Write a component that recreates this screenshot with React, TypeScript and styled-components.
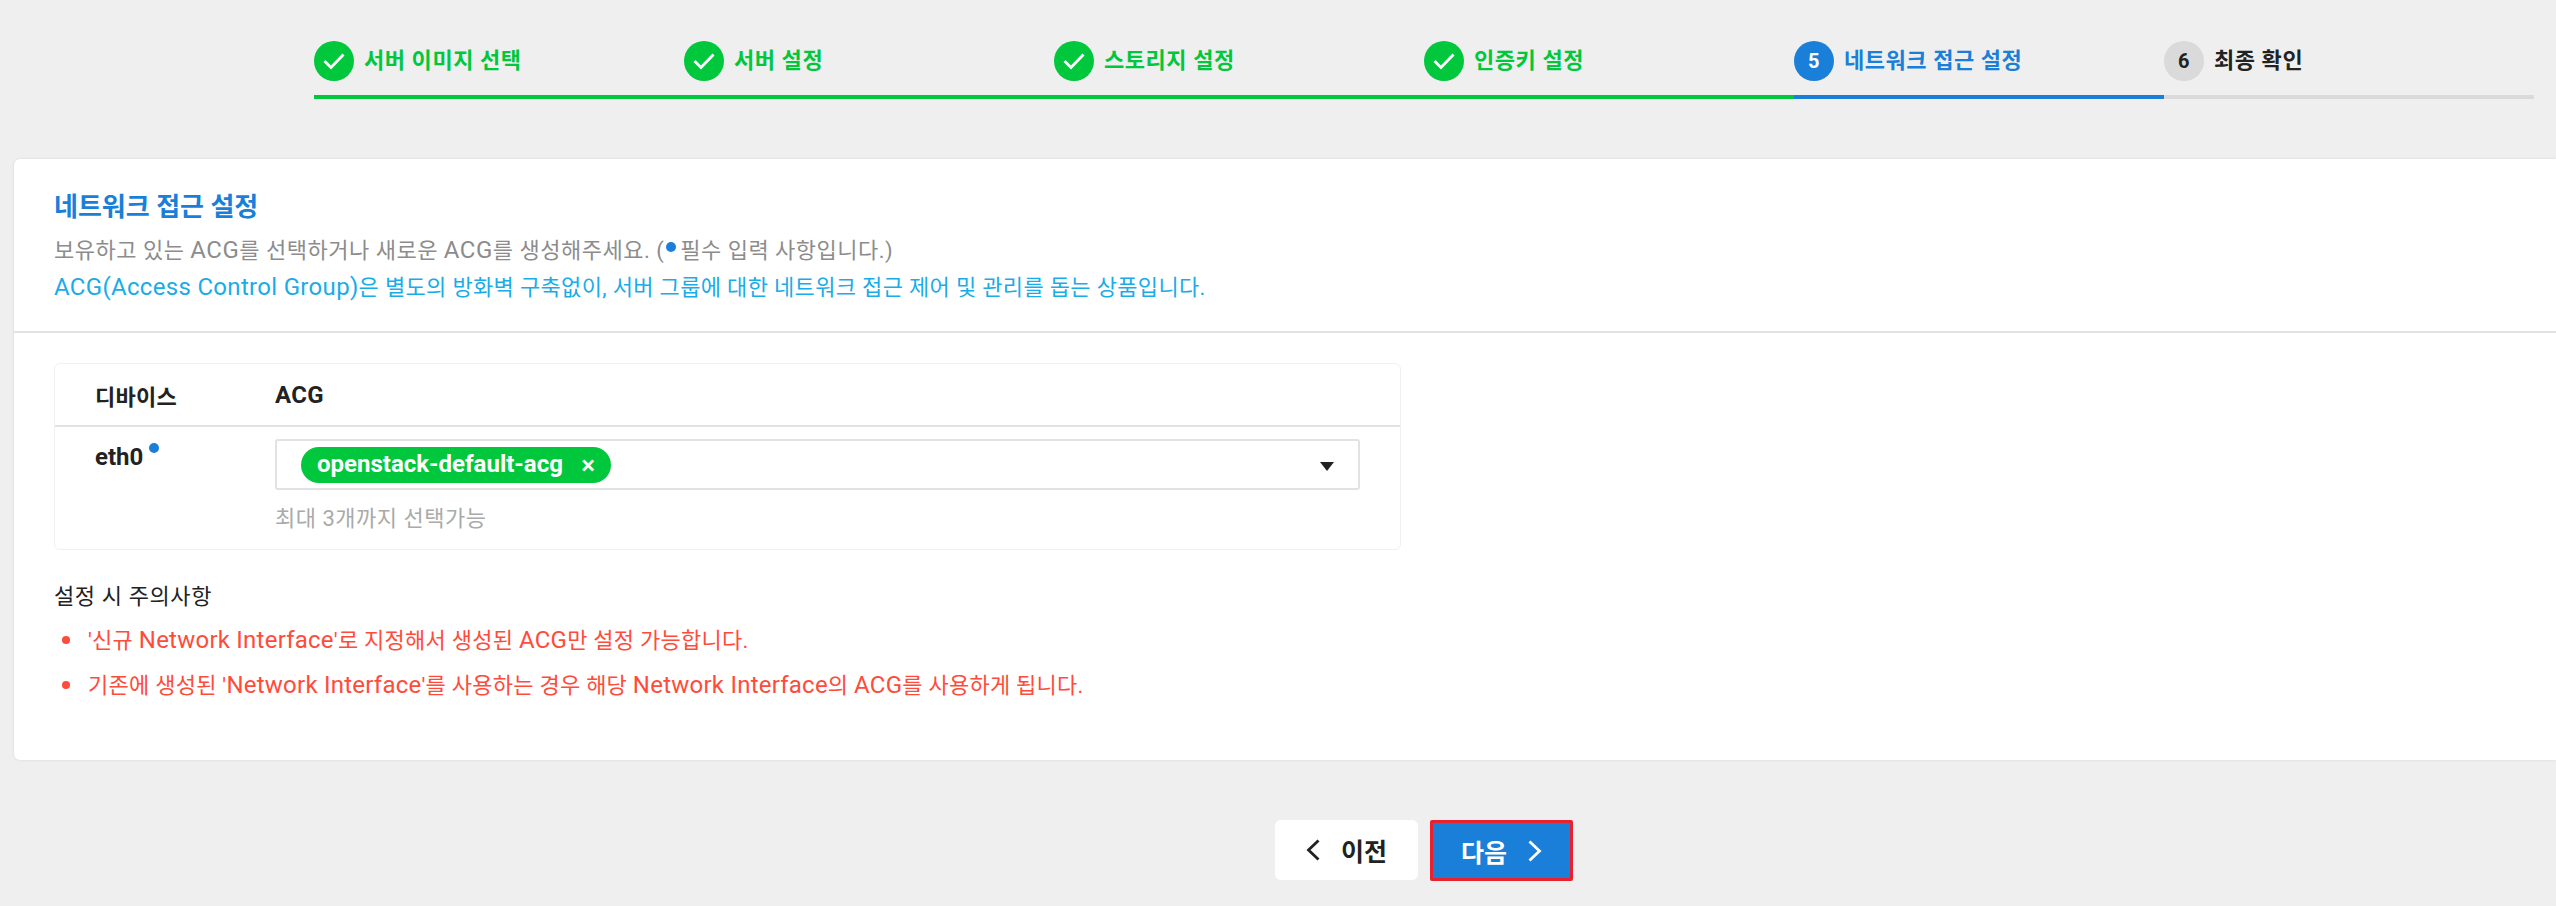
import React from "react";
import styled, { createGlobalStyle } from "styled-components";

const Global = createGlobalStyle`
  html, body { margin: 0; padding: 0; background: #efefef; }
  body { font-family: Roboto, "Noto Sans CJK KR", sans-serif; overflow: hidden; }
  * { box-sizing: border-box; }
`;

const Page = styled.div`
  width: 2556px;
  height: 906px;
  padding-top: 41px;
  display: flex;
  flex-direction: column;
`;

const Latin = styled.span`
  font-size: 1.09em;
`;

const Stepper = styled.ol`
  list-style: none;
  margin: 0 0 0 314px;
  padding: 0;
  display: flex;
`;

type StepState = "done" | "active" | "todo";
const stepColor = { done: "#00c73c", active: "#1a7fd8", todo: "#dadada" };
const stepText = { done: "#00c73c", active: "#1a7fd8", todo: "#222222" };

const Step = styled.li<{ $state: StepState }>`
  width: 370px;
  height: 58px;
  display: flex;
  align-items: flex-start;
  gap: 10px;
  border-bottom: 4px solid ${(p) => stepColor[p.$state]};
  color: ${(p) => stepText[p.$state]};
  font-size: 22px;
  font-weight: 700;
  line-height: 40px;
  letter-spacing: 0.55px;
`;

const StepBadge = styled.span<{ $state: StepState }>`
  width: 40px;
  height: 40px;
  flex: none;
  border-radius: 50%;
  display: flex;
  align-items: center;
  justify-content: center;
  background: ${(p) => stepColor[p.$state]};
  color: ${(p) => (p.$state === "todo" ? "#222222" : "#ffffff")};
  font-size: 20px;
  font-weight: 700;
`;

const Card = styled.section`
  margin: 60px 0 0 14px;
  width: 2542px;
  height: 601px;
  background: #ffffff;
  border-radius: 6px 0 0 6px;
  box-shadow: 0 0 3px rgba(0, 0, 0, 0.1);
`;

const CardHead = styled.header`
  height: 174px;
  padding: 28px 40px 0;
  border-bottom: 2px solid #e2e2e2;
`;

const CardTitle = styled.h2`
  margin: 0 0 5px;
  font-size: 26px;
  line-height: 40px;
  font-weight: 700;
  color: #1a7fd8;
`;

const Description = styled.p<{ $accent?: boolean }>`
  margin: 0;
  font-size: 22px;
  line-height: 37px;
  letter-spacing: ${(p) => (p.$accent ? 0.33 : 0.5)}px;
  white-space: nowrap;
  color: ${(p) => (p.$accent ? "#18ace8" : "#8c8c8c")};
`;

const InlineDot = styled.i`
  display: inline-block;
  width: 10px;
  height: 10px;
  margin: 0 4px 10px 2px;
  border-radius: 50%;
  background: #1a7fd8;
  vertical-align: middle;
`;

const CardBody = styled.div`
  padding: 30px 40px 0;
`;

const Table = styled.div`
  width: 1347px;
  height: 187px;
  border: 1px solid #f0f0f0;
  border-radius: 6px;
  display: flex;
  flex-direction: column;
`;

const TableHead = styled.div`
  height: 63px;
  flex: none;
  display: grid;
  grid-template-columns: 180px 1fr;
  align-items: center;
  padding-left: 40px;
  border-bottom: 2px solid #e2e2e2;
  font-size: 22px;
  font-weight: 700;
  letter-spacing: 0.3px;
  color: #222222;
`;

const TableRow = styled.div`
  display: grid;
  grid-template-columns: 180px 1fr;
  padding: 12px 0 0 40px;
`;

const DeviceName = styled.div`
  padding-top: 3px;
  font-size: 22px;
  font-weight: 700;
  line-height: 30px;
  color: #222222;
  display: flex;
  align-items: flex-start;
`;

const DeviceDot = styled.i`
  width: 10px;
  height: 10px;
  margin: 1px 0 0 6px;
  border-radius: 50%;
  background: #1a7fd8;
`;

const SelectCell = styled.div`
  width: 1085px;
`;

const SelectBox = styled.div`
  height: 51px;
  border: 2px solid #e2e2e2;
  border-radius: 3px;
  padding: 6px 24px 0 24px;
  display: flex;
  justify-content: space-between;
`;

const Chip = styled.span`
  height: 36px;
  width: 310px;
  padding: 0 16px;
  border-radius: 18px;
  background: #00c73c;
  color: #ffffff;
  font-size: 24px;
  font-weight: 700;
  line-height: 35px;
  display: flex;
  justify-content: space-between;
  white-space: nowrap;
`;

const ChipClose = styled.span`
  font-size: 26px;
  font-weight: 500;
  padding-top: 1px;
  margin-right: 0;
`;

const CaretBox = styled.span`
  display: flex;
  align-items: center;
  height: 34px;
  padding-top: 4px;
  color: #222222;
`;

const Hint = styled.div`
  margin-top: 14px;
  font-size: 22px;
  line-height: 30px;
  letter-spacing: 0.5px;
  color: #aaaaaa;
`;

const NoteTitle = styled.h3`
  margin: 32px 0 0;
  font-size: 22px;
  line-height: 30px;
  letter-spacing: 0.6px;
  font-weight: 400;
  color: #222222;
`;

const NoteList = styled.ul`
  list-style: none;
  margin: 6px 0 0;
  padding: 0;
`;

const NoteItem = styled.li`
  position: relative;
  height: 45px;
  padding-left: 34px;
  font-size: 22px;
  line-height: 45px;
  letter-spacing: 0.25px;
  white-space: nowrap;
  color: #ff4b3a;
  &::before {
    content: "";
    position: absolute;
    left: 8px;
    top: 18px;
    width: 8px;
    height: 8px;
    border-radius: 50%;
    background: #ff4b3a;
  }
`;

const Footer = styled.div`
  margin: 60px 0 0 1275px;
  display: flex;
  gap: 12px;
`;

const NavButton = styled.button<{ $primary?: boolean }>`
  width: 143px;
  height: ${(p) => (p.$primary ? 61 : 60)}px;
  padding: 0;
  display: flex;
  align-items: center;
  justify-content: center;
  gap: 21px;
  border: ${(p) => (p.$primary ? "3px solid #e8212e" : "none")};
  border-radius: ${(p) => (p.$primary ? 2 : 6)}px;
  background: ${(p) => (p.$primary ? "#1a7fd8" : "#ffffff")};
  color: ${(p) => (p.$primary ? "#ffffff" : "#222222")};
  font-family: inherit;
  font-size: 25px;
  font-weight: 700;
`;

const Check = () => (
  <svg width="22" height="17" viewBox="0 0 22 17" fill="none" stroke="#fff" strokeWidth="2.8">
    <path d="M1.5 8 L8 14.5 L20.5 1.5" />
  </svg>
);

const Caret = () => (
  <svg width="14" height="10" viewBox="0 0 14 10" fill="currentColor">
    <path d="M0 1 H14 L7 10 Z" />
  </svg>
);

const Chevron = ({ left }: { left?: boolean }) => (
  <svg width="14" height="22" viewBox="0 0 14 22" fill="none" stroke="currentColor" strokeWidth="2.8">
    <path d={left ? "M12.5 1.5 L2.5 11 L12.5 20.5" : "M1.5 1.5 L11.5 11 L1.5 20.5"} />
  </svg>
);

const steps: { label: string; state: StepState }[] = [
  { label: "서버 이미지 선택", state: "done" },
  { label: "서버 설정", state: "done" },
  { label: "스토리지 설정", state: "done" },
  { label: "인증키 설정", state: "done" },
  { label: "네트워크 접근 설정", state: "active" },
  { label: "최종 확인", state: "todo" },
];

export default function App() {
  return (
    <Page>
      <Global />
      <Stepper>
        {steps.map((s, i) => (
          <Step key={s.label} $state={s.state}>
            <StepBadge $state={s.state}>{s.state === "done" ? <Check /> : i + 1}</StepBadge>
            {s.label}
          </Step>
        ))}
      </Stepper>
      <Card>
        <CardHead>
          <CardTitle>네트워크 접근 설정</CardTitle>
          <Description>
            보유하고 있는 <Latin>ACG</Latin>를 선택하거나 새로운 <Latin>ACG</Latin>를 생성해주세요. (<InlineDot />필수 입력 사항입니다.)
          </Description>
          <Description $accent>
            <Latin>ACG(Access Control Group)</Latin>은 별도의 방화벽 구축없이, 서버 그룹에 대한 네트워크 접근 제어 및 관리를 돕는 상품입니다.
          </Description>
        </CardHead>
        <CardBody>
          <Table>
            <TableHead>
              <span>디바이스</span>
              <Latin>ACG</Latin>
            </TableHead>
            <TableRow>
              <DeviceName>
                <Latin>eth0</Latin>
                <DeviceDot />
              </DeviceName>
              <SelectCell>
                <SelectBox>
                  <Chip>
                    openstack-default-acg
                    <ChipClose>×</ChipClose>
                  </Chip>
                  <CaretBox>
                    <Caret />
                  </CaretBox>
                </SelectBox>
                <Hint>최대 3개까지 선택가능</Hint>
              </SelectCell>
            </TableRow>
          </Table>
          <NoteTitle>설정 시 주의사항</NoteTitle>
          <NoteList>
            <NoteItem>'신규 <Latin>Network Interface</Latin>'로 지정해서 생성된 <Latin>ACG</Latin>만 설정 가능합니다.</NoteItem>
            <NoteItem>기존에 생성된 '<Latin>Network Interface</Latin>'를 사용하는 경우 해당 <Latin>Network Interface</Latin>의 <Latin>ACG</Latin>를 사용하게 됩니다.</NoteItem>
          </NoteList>
        </CardBody>
      </Card>
      <Footer>
        <NavButton>
          <Chevron left />
          이전
        </NavButton>
        <NavButton $primary>
          다음
          <Chevron />
        </NavButton>
      </Footer>
    </Page>
  );
}
